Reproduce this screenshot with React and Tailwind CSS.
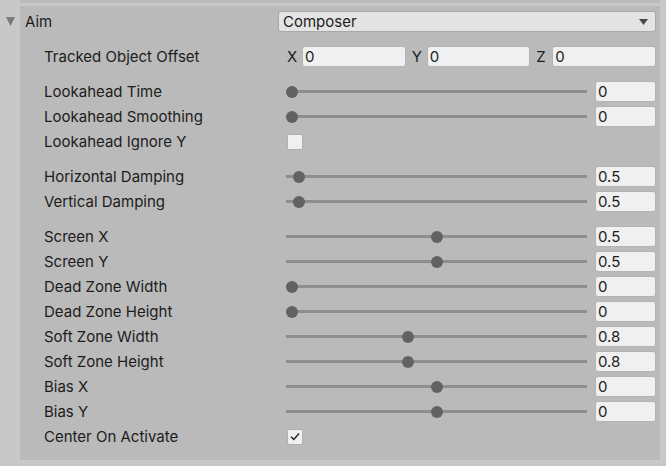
import React from 'react';

const font = { fontFamily: 'Inter, "Noto Sans", sans-serif' };

// value position along the slider, 0..1
const sliderGroups = [
  [
    { label: 'Lookahead Time', value: '0', pos: 0 },
    { label: 'Lookahead Smoothing', value: '0', pos: 0 },
    { label: 'Lookahead Ignore Y', toggle: false },
  ],
  [
    { label: 'Horizontal Damping', value: '0.5', pos: 0.025 },
    { label: 'Vertical Damping', value: '0.5', pos: 0.025 },
  ],
  [
    { label: 'Screen X', value: '0.5', pos: 0.5 },
    { label: 'Screen Y', value: '0.5', pos: 0.5 },
    { label: 'Dead Zone Width', value: '0', pos: 0 },
    { label: 'Dead Zone Height', value: '0', pos: 0 },
    { label: 'Soft Zone Width', value: '0.8', pos: 0.4 },
    { label: 'Soft Zone Height', value: '0.8', pos: 0.4 },
    { label: 'Bias X', value: '0', pos: 0.5 },
    { label: 'Bias Y', value: '0', pos: 0.5 },
    { label: 'Center On Activate', toggle: true },
  ],
];

function Field({ value, className = '' }) {
  return (
    <div
      className={`h-[21px] rounded-[3px] bg-[#f0f0f0] border border-[#b4b4b4] pl-[2px] flex items-center text-[15px] text-[#1c1c1c] leading-none ${className}`}
    >
      {value}
    </div>
  );
}

function Slider({ pos }) {
  return (
    <div className="relative flex-1 h-[12px] flex items-center">
      <div className="w-full h-[3px] bg-[#8e8e8e]" />
      <div
        className="absolute top-0 w-[12px] h-[12px] rounded-full bg-[#626262]"
        style={{ left: `calc(${pos} * (100% - 12px))` }}
      />
    </div>
  );
}

function Checkbox({ checked }) {
  return (
    <div className="ml-[1px] w-[16px] h-[16px] rounded-[2px] bg-[#f0f0f0] border border-[#b0b0b0] flex items-center justify-center">
      {checked && (
        <svg width="10" height="9" viewBox="0 0 10 9">
          <path d="M1 4.8 L3.8 7.4 L9 1.4" fill="none" stroke="#2a2a2a" strokeWidth="1.5" />
        </svg>
      )}
    </div>
  );
}

function Row({ label, children }) {
  return (
    <div className="flex h-[25px] items-center pl-[24px]">
      <div className="w-[242px] text-[15px] text-[#1c1c1c] leading-none">{label}</div>
      <div className="flex-1 flex items-center">{children}</div>
    </div>
  );
}

export default function App() {
  return (
    <div className="w-[666px] h-[466px] bg-[#c8c8c8] flex flex-col" style={font}>
      <div className="ml-[20px] w-[640px] h-[3px] bg-[#bababa]" />
      <div className="h-[3px]" />
      <div className="flex">
        <div className="w-[20px] pt-[11px] pl-[6px]">
          <svg width="9" height="9" viewBox="0 0 9 9">
            <polygon points="0,0 9,0 4.5,9" fill="#7a7a7a" />
          </svg>
        </div>
        <div className="w-[640px] h-[454px] bg-[#bababa] pt-[3px] pr-[4px]">
          <div className="flex h-[25px] items-center pl-[5px]">
            <div className="w-[253px] text-[15px] text-[#1c1c1c] leading-none">Aim</div>
            <div className="flex-1 h-[21px] rounded-[3px] bg-[#e4e4e4] border border-[#a9a9a9] pl-[4px] pr-[7px] flex items-center justify-between text-[15px] text-[#1c1c1c] leading-none">
              <span>Composer</span>
              <svg width="9" height="6" viewBox="0 0 9 6">
                <polygon points="0,0 9,0 4.5,6" fill="#4a4a4a" />
              </svg>
            </div>
          </div>

          <div className="h-[10px]" />
          <Row label="Tracked Object Offset">
            <div className="w-[16px] pl-[1px] text-[15px] text-[#1c1c1c] leading-none">X</div>
            <Field value="0" className="flex-1" />
            <div className="w-[21px] pl-[6px] text-[15px] text-[#1c1c1c] leading-none">Y</div>
            <Field value="0" className="flex-1" />
            <div className="w-[22px] pl-[6px] text-[15px] text-[#1c1c1c] leading-none">Z</div>
            <Field value="0" className="flex-1" />
          </Row>

          {sliderGroups.map((group, gi) => (
            <div key={gi}>
              <div className="h-[10px]" />
              {group.map((r) => (
                <Row key={r.label} label={r.label}>
                  {'toggle' in r ? (
                    <Checkbox checked={r.toggle} />
                  ) : (
                    <>
                      <Slider pos={r.pos} />
                      <Field value={r.value} className="ml-[8px] w-[61px]" />
                    </>
                  )}
                </Row>
              ))}
            </div>
          ))}
        </div>
      </div>
    </div>
  );
}
